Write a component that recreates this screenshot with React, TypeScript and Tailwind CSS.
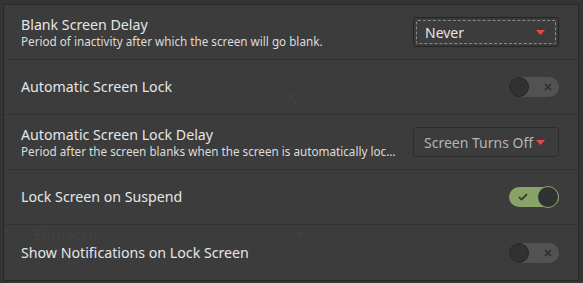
import React from 'react';

type Row =
  | { kind: 'select'; title: string; sub: string; value: string; focused?: boolean; dim?: boolean }
  | { kind: 'switch'; title: string; on: boolean };

const rows: Row[] = [
  {
    kind: 'select',
    title: 'Blank Screen Delay',
    sub: 'Period of inactivity after which the screen will go blank.',
    value: 'Never',
    focused: true,
  },
  { kind: 'switch', title: 'Automatic Screen Lock', on: false },
  {
    kind: 'select',
    title: 'Automatic Screen Lock Delay',
    sub: 'Period after the screen blanks when the screen is automatically locked.',
    value: 'Screen Turns Off',
    dim: true,
  },
  { kind: 'switch', title: 'Lock Screen on Suspend', on: true },
  { kind: 'switch', title: 'Show Notifications on Lock Screen', on: false },
];

const Caret = () => (
  <svg width="9" height="5" viewBox="0 0 9 5" className="shrink-0">
    <path d="M0 0h9L4.5 5z" fill="#e5484d" />
  </svg>
);

const Switch = ({ on }: { on: boolean }) =>
  on ? (
    <div className="w-[50px] h-[20px] rounded-full bg-[#87a36a] flex items-center justify-between pl-[9px]">
      <svg width="10" height="8" viewBox="0 0 10 8">
        <path d="M1 4.2l2.6 2.4L9 1.2" stroke="#2f3a28" strokeWidth="1.8" fill="none" />
      </svg>
      <div className="w-[22px] h-[22px] rounded-full bg-[#313131] border border-[#87a36a]" />
    </div>
  ) : (
    <div className="w-[50px] h-[20px] rounded-full bg-[#525252] flex items-center justify-between pr-[7px]">
      <div className="w-[20px] h-[20px] rounded-full bg-[#313131] border border-[#262626]" />
      <svg width="8" height="8" viewBox="0 0 8 8">
        <path d="M1 1l6 6M7 1L1 7" stroke="#2e2e2e" strokeWidth="1.6" />
      </svg>
    </div>
  );

export default function App() {
  return (
    <div
      className="relative w-[583px] h-[283px] bg-[#343434] pt-[4px] pl-[3px] pr-[4px]"
      style={{ fontFamily: '"Noto Sans", "DejaVu Sans", sans-serif' }}
    >
      <div className="border border-[#292929] bg-[#3c3c3c] flex flex-col">
        {rows.map((r, i) => (
          <div
            key={r.title}
            className={`h-[55px] flex items-center pl-[17px] pr-[19px] ${i < rows.length - 1 ? 'border-b border-[#333333]' : 'h-[54px]'}`}
          >
            <div className="flex-1 min-w-0">
              <div className="text-[14.2px] leading-[18px] text-[#e6e6e6]">{r.title}</div>
              {r.kind === 'select' && (
                <div className="text-[11.7px] leading-[15px] text-[#dcdcdc] truncate pr-[14px]">{r.sub}</div>
              )}
            </div>
            {r.kind === 'select' ? (
              <div
                className={`w-[146px] h-[30px] rounded-[3px] border flex items-center ${
                  r.focused ? 'border-[#232323] p-[2px]' : 'border-[#2c2c2c]'
                }`}
              >
                <div
                  className={`flex-1 h-full flex items-center justify-between ${
                    r.focused ? 'border border-dashed border-[#8a8a8a] rounded-[2px] pl-[8px] pr-[10px]' : 'pl-[10px] pr-[13px]'
                  }`}
                >
                  <span className={`text-[14px] ${r.dim ? 'text-[#b4b4b4]' : 'text-[#e6e6e6]'}`}>{r.value}</span>
                  <Caret />
                </div>
              </div>
            ) : (
              <Switch on={r.on} />
            )}
          </div>
        ))}
      </div>

      {/* faint ghost of the window underneath */}
      <div className="pointer-events-none absolute left-[34px] top-[226px] text-[14.5px] leading-[16px] text-[#424242]">Енглески</div>
      <svg className="pointer-events-none absolute left-[295px] top-[232px]" width="10" height="6" viewBox="0 0 10 6">
        <path d="M0 0h10L5 6z" fill="#414141" />
      </svg>
      <svg className="pointer-events-none absolute left-[285px] top-[92px]" width="12" height="12" viewBox="0 0 12 12">
        <path d="M1 1l10 10M11 1L1 11" stroke="#424242" strokeWidth="1.3" />
      </svg>
    </div>
  );
}
